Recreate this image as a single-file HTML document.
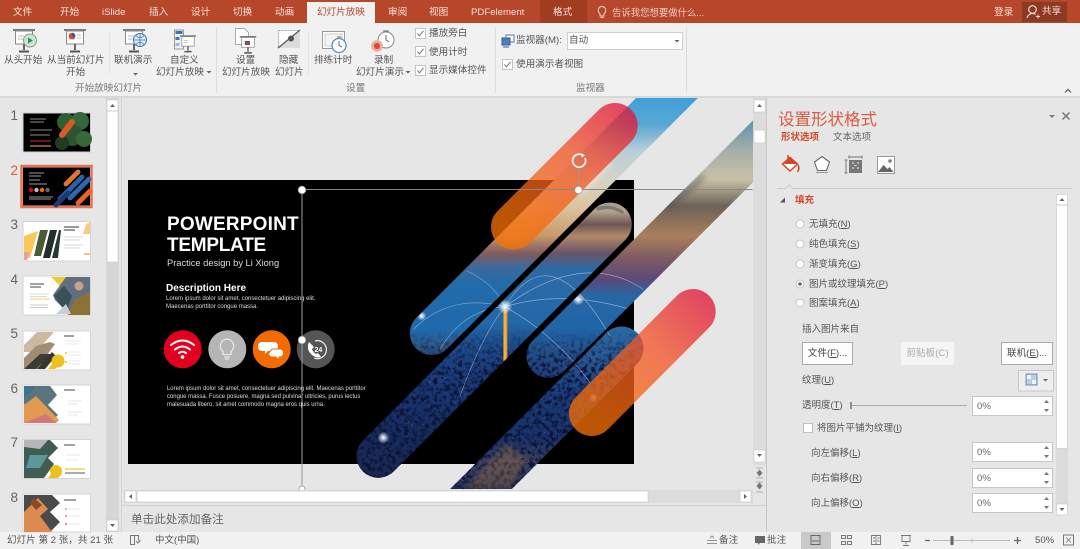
<!DOCTYPE html>
<html lang="zh"><head><meta charset="utf-8"><title>PowerPoint</title>
<style>
html,body{margin:0;padding:0;width:1080px;height:549px;overflow:hidden;background:#e6e6e6}
body{font-family:"Liberation Sans","Noto Sans CJK SC",sans-serif;font-size:9.6px;color:#555;position:relative;filter:blur(.25px)}
.t{position:absolute;white-space:nowrap;line-height:12px;height:12px;margin-top:1px}
.b{position:absolute}
svg{position:absolute;left:0;top:0}
.w{color:#f6e3dc}
u{text-decoration:underline}
.s{color:#fff}
.n{font-size:13.5px;margin-top:0;left:10.5px;color:#666}
.inp{position:absolute;background:#fff;border:1px solid #c6c6c6;box-sizing:border-box;left:972px;width:81px;height:20px;padding-left:4px;line-height:19px;color:#666}
.btn{position:absolute;background:#fdfdfd;border:1px solid #ababab;box-sizing:border-box;text-align:center;height:23px;line-height:22px;color:#444}
</style></head><body>

<!-- panel backgrounds -->
<div class="b" style="left:0;top:0;width:1080px;height:23px;background:#b7472a"></div>
<div class="b" style="left:307px;top:2px;width:68px;height:21px;background:#f1f1f1"></div>
<div class="b" style="left:540px;top:0;width:47px;height:23px;background:#a13c21"></div>
<div class="b" style="left:1022px;top:2px;width:45px;height:20px;background:#8e3a22"></div>
<div class="b" style="left:0;top:23px;width:1080px;height:73px;background:#f1f1f1"></div>
<div class="b" style="left:0;top:96px;width:1080px;height:2px;background:#d8d8d8"></div>
<div class="b" style="left:0;top:532px;width:1080px;height:17px;background:#f1f1f1"></div>
<div class="b" style="left:801px;top:532px;width:30px;height:17px;background:#c9c9c9"></div>
<div class="b" style="left:121px;top:98px;width:1px;height:434px;background:#d4d4d4"></div>
<div class="b" style="left:766px;top:98px;width:1px;height:434px;background:#c8c8c8"></div>
<div class="b" style="left:122px;top:505px;width:644px;height:1px;background:#cfcfcf"></div>
<!-- ribbon separators -->
<div class="b" style="left:216px;top:27px;width:1px;height:66px;background:#dcdcdc"></div>
<div class="b" style="left:495px;top:27px;width:1px;height:66px;background:#dcdcdc"></div>
<div class="b" style="left:686px;top:27px;width:1px;height:66px;background:#dcdcdc"></div>
<div class="b" style="left:109px;top:32px;width:1px;height:42px;background:#e4e4e4"></div>
<div class="b" style="left:308px;top:32px;width:1px;height:42px;background:#e4e4e4"></div>

<!-- tabs -->
<span class="t w" style="left:13px;top:6px">文件</span>
<span class="t w" style="left:60px;top:6px">开始</span>
<span class="t w" style="left:102px;top:6px">iSlide</span>
<span class="t w" style="left:149px;top:6px">插入</span>
<span class="t w" style="left:191px;top:6px">设计</span>
<span class="t w" style="left:233px;top:6px">切换</span>
<span class="t w" style="left:275px;top:6px">动画</span>
<span class="t" style="left:317px;top:6px;color:#b7472a">幻灯片放映</span>
<span class="t w" style="left:388px;top:6px">审阅</span>
<span class="t w" style="left:429px;top:6px">视图</span>
<span class="t w" style="left:471px;top:6px">PDFelement</span>
<span class="t w" style="left:553px;top:6px">格式</span>
<span class="t w" style="left:612px;top:5.5px;opacity:.85;font-size:9.4px">告诉我您想要做什么...</span>
<span class="t w" style="left:994px;top:6px">登录</span>
<span class="t w" style="left:1042px;top:5px">共享</span>

<!-- ribbon labels -->
<span class="t" style="left:4px;top:54px">从头开始</span>
<span class="t" style="left:47px;top:54px">从当前幻灯片</span>
<span class="t" style="left:66px;top:66px">开始</span>
<span class="t" style="left:114px;top:54px">联机演示</span>
<span class="t" style="left:170px;top:54px">自定义</span>
<span class="t" style="left:156px;top:66px">幻灯片放映</span>
<span class="t" style="left:236px;top:54px">设置</span>
<span class="t" style="left:222px;top:66px">幻灯片放映</span>
<span class="t" style="left:279px;top:54px">隐藏</span>
<span class="t" style="left:275px;top:66px">幻灯片</span>
<span class="t" style="left:314px;top:54px">排练计时</span>
<span class="t" style="left:374px;top:54px">录制</span>
<span class="t" style="left:356px;top:66px">幻灯片演示</span>
<span class="t" style="left:429px;top:27px">播放旁白</span>
<span class="t" style="left:429px;top:45.500px">使用计时</span>
<span class="t" style="left:429px;top:64px">显示媒体控件</span>
<span class="t" style="left:516px;top:34px">监视器(M):</span>
<div class="b" style="left:567px;top:32px;width:116px;height:18px;background:#fff;border:1px solid #d0d0d0;box-sizing:border-box"></div>
<span class="t" style="left:569px;top:34px">自动</span>
<span class="t" style="left:516px;top:58px">使用演示者视图</span>
<span class="t" style="left:75px;top:82px;color:#777">开始放映幻灯片</span>
<span class="t" style="left:346px;top:82px;color:#777">设置</span>
<span class="t" style="left:576px;top:82px;color:#777">监视器</span>

<!-- slide base -->
<div class="b" style="left:128px;top:180px;width:506px;height:284px;background:#000"></div>
<span class="t s" style="left:167px;top:214px;font-size:19px;font-weight:bold;line-height:20px;height:20px;letter-spacing:.2px;margin-top:1px">POWERPOINT</span>
<span class="t s" style="left:167px;top:235px;font-size:19px;font-weight:bold;line-height:20px;height:20px;letter-spacing:-.25px;margin-top:1px">TEMPLATE</span>
<span class="t" style="left:167px;top:257px;font-size:9.3px;color:#ddd;margin-top:0">Practice design by Li Xiong</span>
<span class="t s" style="left:166px;top:281px;font-size:10px;font-weight:bold;margin-top:1.5px">Description Here</span>
<span class="t" style="left:166px;top:292px;font-size:6px;color:#ddd;margin-top:.5px">Lorem ipsum dolor sit amet, consectetuer adipiscing elit.</span>
<span class="t" style="left:166px;top:300px;font-size:6px;color:#ddd;margin-top:.5px">Maecenas porttitor congue massa.</span>
<span class="t" style="left:167px;top:382px;font-size:5.95px;color:#ddd;margin-top:.5px">Lorem ipsum dolor sit amet, consectetuer adipiscing elit. Maecenas porttitor</span>
<span class="t" style="left:167px;top:390px;font-size:5.95px;color:#ddd;margin-top:.5px">congue massa. Fusce posuere, magna sed pulvinar ultricies, purus lectus</span>
<span class="t" style="left:167px;top:398px;font-size:5.95px;color:#ddd;margin-top:.5px">malesuada libero, sit amet commodo magna eros quis urna.</span>

<!-- artwork & chrome graphics -->
<svg width="1080" height="549" viewBox="0 0 1080 549">
<defs>
<linearGradient id="ga" gradientUnits="userSpaceOnUse" x1="0" y1="0" x2="0" y2="790">
<stop offset="0" stop-color="#3d9fd8"/><stop offset=".11" stop-color="#5aa8d4"/><stop offset=".21" stop-color="#b9cfd8"/><stop offset=".32" stop-color="#d6d3c5"/><stop offset=".42" stop-color="#dcc4a0"/><stop offset=".53" stop-color="#c79a6b"/><stop offset=".6" stop-color="#7d5a5f"/><stop offset=".65" stop-color="#3e6a9c"/><stop offset=".71" stop-color="#236ba9"/><stop offset=".89" stop-color="#1f69ad"/><stop offset=".94" stop-color="#2d5a8c"/><stop offset="1" stop-color="#25406e"/></linearGradient>
<linearGradient id="gb" gradientUnits="userSpaceOnUse" x1="0" y1="320" x2="0" y2="1140">
<stop offset="0" stop-color="#9c9a92"/><stop offset=".03" stop-color="#b5a58e"/><stop offset=".08" stop-color="#6e5555"/><stop offset=".122" stop-color="#b08a66"/><stop offset=".183" stop-color="#6a5568"/><stop offset=".244" stop-color="#2c6aa6"/><stop offset=".44" stop-color="#2368a8"/><stop offset=".51" stop-color="#1e4f8e"/><stop offset=".585" stop-color="#1b3f80"/><stop offset=".83" stop-color="#152c60"/><stop offset="1" stop-color="#1a2850"/></linearGradient>
<linearGradient id="gc" gradientUnits="userSpaceOnUse" x1="0" y1="75" x2="0" y2="850">
<stop offset="0" stop-color="#5f93ab"/><stop offset=".12" stop-color="#a8b0a8"/><stop offset=".226" stop-color="#c9c0a8"/><stop offset=".329" stop-color="#6d6258"/><stop offset=".445" stop-color="#a97f5d"/><stop offset=".535" stop-color="#7d5963"/><stop offset=".613" stop-color="#5a4a78"/><stop offset=".677" stop-color="#2866a5"/><stop offset=".806" stop-color="#1f65a8"/><stop offset=".91" stop-color="#234c86"/><stop offset="1" stop-color="#1d3c78"/></linearGradient>
<linearGradient id="gd" gradientUnits="userSpaceOnUse" x1="0" y1="690" x2="0" y2="1190">
<stop offset="0" stop-color="#2a6aa5"/><stop offset=".18" stop-color="#2a5a95"/><stop offset=".42" stop-color="#1a3a78"/><stop offset=".68" stop-color="#1b3268"/><stop offset=".82" stop-color="#3a3f60"/><stop offset="1" stop-color="#1c2c55"/></linearGradient>
<linearGradient id="o1" gradientUnits="userSpaceOnUse" x1="490" y1="395" x2="860" y2="50">
<stop offset="0" stop-color="#f87006"/><stop offset=".55" stop-color="#f25428"/><stop offset="1" stop-color="#df1038"/></linearGradient>
<linearGradient id="o2" gradientUnits="userSpaceOnUse" x1="725" y1="950" x2="1095" y2="610">
<stop offset="0" stop-color="#f87006"/><stop offset=".55" stop-color="#f25428"/><stop offset="1" stop-color="#df1038"/></linearGradient>
<mask id="mk" maskUnits="userSpaceOnUse" x="0" y="0" width="1300" height="1300">
<g stroke="#fff" stroke-width="131" stroke-linecap="round" fill="none">
<path d="M245 712L1000-43"/><path d="M85 1080L780 385"/><path d="M595 780L1300 75"/><path d="M815 757L300 1272"/></g></mask>
<clipPath id="cv"><rect x="122" y="98" width="631" height="391"/></clipPath>
<filter id="cityn" x="0" y="0" width="1" height="1" color-interpolation-filters="sRGB"><feTurbulence type="fractalNoise" baseFrequency=".22" numOctaves="2" seed="7"/><feColorMatrix type="matrix" values="0 0 0 0 .95  0 0 0 0 .58  0 0 0 0 .26  4 5 0 0 -6.1"/></filter>
<filter id="cityb" x="0" y="0" width="1" height="1" color-interpolation-filters="sRGB"><feTurbulence type="fractalNoise" baseFrequency=".08" numOctaves="3" seed="3"/><feColorMatrix type="matrix" values="0 0 0 0 .04  0 0 0 0 .08  0 0 0 0 .22  0 3 3 0 -2.8"/></filter>
<filter id="soft" x="-.2" y="-.2" width="1.4" height="1.4"><feGaussianBlur stdDeviation="9"/></filter>
<radialGradient id="glow"><stop offset="0" stop-color="#fff"/><stop offset=".35" stop-color="#fff" stop-opacity=".7"/><stop offset="1" stop-color="#fff" stop-opacity="0"/></radialGradient>
<linearGradient id="cityfade" gradientUnits="userSpaceOnUse" x1="0" y1="700" x2="0" y2="820"><stop offset="0" stop-color="#fff" stop-opacity="0"/><stop offset="1" stop-color="#fff"/></linearGradient>
<mask id="cf" maskUnits="userSpaceOnUse" x="0" y="0" width="1300" height="1300"><rect width="1300" height="1300" fill="url(#cityfade)"/></mask>
<symbol id="proj" viewBox="0 0 22 24" overflow="visible"><rect x="0" y="0" width="22" height="2" fill="#7a7a7a"/><rect x="2.5" y="2" width="17" height="13" fill="#fff" stroke="#8a8a8a"/><path d="M11 15v6" stroke="#666" stroke-width="2"/><path d="M6 22.5h10" stroke="#555" stroke-width="2"/><path d="M5 7h6M5 10h6" stroke="#bbb"/></symbol>
<symbol id="cb" viewBox="0 0 11 11"><rect x=".5" y=".5" width="10" height="10" fill="#fff" stroke="#c4c4c4"/><path d="M2.5 5.5l2 2.3 4-5" fill="none" stroke="#777" stroke-width="1"/></symbol>
</defs>

<!-- main art in zoom coordinates -->
<g clip-path="url(#cv)"><g transform="translate(350 96) scale(.33333)">
<g fill="none" stroke-width="131" stroke-linecap="round">
<path stroke="url(#ga)" d="M245 712L1000-43"/>
<path stroke="url(#gb)" d="M85 1080L780 385"/>
<path stroke="url(#gc)" d="M595 780L1300 75"/>
<path stroke="url(#gd)" d="M815 757L300 1272"/>
</g>
<g mask="url(#mk)">
<g mask="url(#cf)"><rect x="0" y="700" width="1000" height="500" filter="url(#cityb)"/><rect x="0" y="700" width="1000" height="500" filter="url(#cityn)"/></g>
<path d="M340 1180L470 1040 530 1090 480 1180Z" fill="#c98a3e" opacity=".28" filter="url(#soft)"/>
<path d="M460 640h12v155h-12z" fill="#e69a2a"/>
<path d="M465 640v150" stroke="#f8c860" stroke-width="3"/>
<path d="M1060 240Q1000 300 950 330" stroke="#39404a" stroke-width="16" fill="none" opacity=".45" filter="url(#soft)"/>
<path d="M780 195Q720 250 690 290" stroke="#f6f1e8" stroke-width="26" fill="none" opacity=".5" filter="url(#soft)"/>
<path d="M740 340Q780 325 820 350" stroke="#4a4a4a" stroke-width="10" fill="none" opacity=".45"/>
<g fill="none" stroke="#fff" stroke-width="2" opacity=".45">
<path d="M190 700Q300 590 465 632"/><path d="M465 632Q600 410 780 720"/><path d="M465 632Q700 460 880 580"/>
<path d="M330 900Q400 710 465 632"/><path d="M270 760Q340 640 465 632"/><path d="M350 525Q430 560 465 632"/>
<path d="M465 632Q640 580 840 640"/><path d="M465 632Q620 720 720 860"/></g>
<circle cx="465" cy="632" r="22" fill="url(#glow)"/><circle cx="685" cy="610" r="18" fill="url(#glow)"/><circle cx="215" cy="660" r="14" fill="url(#glow)"/><circle cx="100" cy="1025" r="18" fill="url(#glow)"/><circle cx="730" cy="905" r="14" fill="url(#glow)" opacity=".7"/>
</g>
<g fill="none" stroke-width="136" stroke-linecap="round" opacity=".76">
<path stroke="url(#o1)" d="M491 393L795 89"/>
<path stroke="url(#o2)" d="M725 952L1029 647"/>
</g>
</g></g>

<!-- slide circles -->
<circle cx="182.7" cy="349.3" r="19" fill="#e2001f"/><circle cx="227.3" cy="349.3" r="19" fill="#b5b5b5"/><circle cx="271.7" cy="349.3" r="19" fill="#f26b00"/><circle cx="315.7" cy="349.3" r="19" fill="#555"/>
<g fill="none" stroke="#fff" stroke-width="2" stroke-linecap="round"><path d="M171 345q11.500-9 23 0"/><path d="M175 349.500q7.500-6 15 0"/><path d="M179 353q3.500-2.500 7 0"/></g><circle cx="182.500" cy="357" r="1.800" fill="#fff"/>
<path d="M227 339a7 7 0 0 0-4 12.500v3h8v-3a7 7 0 0 0-4-12.500zM224 357h6M225 359h4" fill="none" stroke="#e8e8e8" stroke-width="1.300"/>
<path d="M262 342h12a4 4 0 0 1 4 4v1a4 4 0 0 1-4 4h-6l-3 3v-3h-3a4 4 0 0 1-4-4v-1a4 4 0 0 1 4-4z" fill="#fff"/><path d="M272 349h8a3.500 3.500 0 0 1 3.500 3.500v1a3.500 3.500 0 0 1-3.500 3.500h-1v3l-3-3h-4a3.500 3.500 0 0 1-3.500-3.500z" fill="#fff" stroke="#f26b00"/>
<path d="M315 341a9 9 0 1 1-1 17" fill="none" stroke="#eee" stroke-width="1.200"/><path d="M309 342q-3 7 2 12t10 3l-3-4-2 1q-3-2-4-5l2-2z" fill="#fff"/>
<text x="314.500" y="352" font-size="7" font-weight="bold" fill="#fff" font-family="Liberation Sans,sans-serif">24</text>

<!-- selection -->
<g stroke="#888" fill="none"><path d="M302 189.500H752.500"/><path d="M302 190V489" stroke="#9a9a9a"/><path d="M578.500 168V188" stroke="#999"/></g>
<g fill="#fff" stroke="#999" stroke-width=".8"><circle cx="302" cy="190" r="3.800"/><circle cx="578.500" cy="190" r="3.800"/><circle cx="302" cy="340" r="3.800"/><circle cx="302" cy="489" r="3"/></g>
<path d="M585 158a6.500 6.500 0 1 1-2-2.500" fill="none" stroke="#f2f2f2" stroke-width="1.800"/><path d="M581 153l4 2.500-3.500 2z" fill="#f2f2f2"/>

<!-- left scrollbar -->
<rect x="106" y="98" width="13" height="434" fill="#d6d6d6"/><rect x="107" y="100" width="11" height="162" fill="#fff" stroke="#c6c6c6" stroke-width=".6"/><path d="M107 111h11" stroke="#ccc"/><rect x="107" y="520" width="11" height="11" fill="#fff" stroke="#c6c6c6" stroke-width=".6"/>
<path d="M110 107l2.500-3 2.500 3zM110 524l2.500 3 2.500-3z" fill="#666"/>

<!-- canvas scrollbars -->
<rect x="753" y="98" width="13" height="367" fill="#dcdcdc"/><rect x="754" y="100" width="11" height="12" fill="#fff" stroke="#c6c6c6" stroke-width=".6"/><rect x="754" y="130" width="11" height="13" fill="#fff" stroke="#c6c6c6" stroke-width=".6"/><rect x="754" y="450" width="11" height="12" fill="#fff" stroke="#c6c6c6" stroke-width=".6"/>
<path d="M757 107l2.500-3 2.500 3zM757 454l2.500 3 2.500-3z" fill="#666"/>
<path d="M756 468h7M756 478h7M757 473l2.500-3 2.500 3zM757 473l2.500 3 2.500-3z" fill="#777" stroke="#777" stroke-width=".6"/><path d="M756 492h7M756 482h7M757 486l2.500 3 2.500-3zM757 486l2.500-3 2.500 3z" fill="#777" stroke="#777" stroke-width=".6"/>
<rect x="124" y="490" width="629" height="13" fill="#dcdcdc"/><rect x="125" y="491" width="11" height="11" fill="#fff" stroke="#c6c6c6" stroke-width=".6"/><rect x="137" y="491" width="511" height="11" fill="#fff" stroke="#c6c6c6" stroke-width=".6"/><rect x="740" y="491" width="11" height="11" fill="#fff" stroke="#c6c6c6" stroke-width=".6"/>
<path d="M132 494l-3 2.500 3 2.500zM744 494l3 2.500-3 2.500z" fill="#666"/>

<!-- thumbnails -->
<g style="filter:blur(.35px)">
<rect x="23" y="113" width="67.500" height="39" fill="#000" stroke="#cfcfcf"/>
<circle cx="66" cy="122" r="9" fill="#2f5f34"/><circle cx="80" cy="121" r="9" fill="#33683a"/><circle cx="72" cy="135" r="11" fill="#2b5530"/><circle cx="84" cy="139" r="8" fill="#36683a"/><circle cx="62" cy="143" r="7" fill="#1e3c22"/>
<path d="M62 135L72 122" stroke="#d85a26" stroke-width="6" stroke-linecap="round"/>
<path d="M30 119h16M30 122h14M30 130h22M30 135h20" stroke="#bbb" stroke-width=".8"/><path d="M30 141h21" stroke="#b02030" stroke-width="1.300"/><path d="M30 146h21" stroke="#d88a20" stroke-width="1.300"/>

<rect x="21.500" y="166" width="70" height="41" fill="none" stroke="#e9704f" stroke-width="2.500"/>
<rect x="23" y="167.500" width="67" height="38" fill="#000"/>
<g stroke-linecap="round" stroke-width="4.800" fill="none"><path d="M60 199L82 177" stroke="#2563ad"/><path d="M70 198L89 179" stroke="#2a68b0"/><path d="M56 205L68 193" stroke="#1c3a70"/><path d="M66 184L78 172" stroke="#e8742a"/><path d="M78 203L90 191" stroke="#e8642a"/></g>
<path d="M29 173h15M29 176h12M29 180h11M29 184h18M29 197h24M29 199h22" stroke="#ccc" stroke-width=".8"/>
<circle cx="31" cy="190" r="2.200" fill="#e2001f"/><circle cx="36.500" cy="190" r="2.200" fill="#bbb"/><circle cx="42" cy="190" r="2.200" fill="#f26b00"/><circle cx="47.500" cy="190" r="2.200" fill="#666"/>

<rect x="23" y="221.500" width="67.500" height="39.500" fill="#fff" stroke="#d4d4d4"/>
<path d="M24 236L38 231 30 258H24Z" fill="#f8c858"/><path d="M24 252L30 252 27 260H24Z" fill="#e8a0a0"/>
<path d="M34 256L40 230H48L41 256Z" fill="#4c5a38"/><path d="M43 258L50 230H57L50 258Z" fill="#232f2c"/><path d="M52 258L59 230H61L58 258Z" fill="#28392f"/>
<path d="M64 227h15M64 230h11" stroke="#333" stroke-width="1"/><path d="M64 237h19M64 240h16M64 245h19M64 248h16" stroke="#ccc" stroke-width=".8"/><path d="M86 224L90 222V234H83Z" fill="#f6cc80"/><path d="M84 254h6" stroke="#f0a030" stroke-width="1.300"/>

<rect x="23" y="276" width="67.500" height="39" fill="#fff" stroke="#d4d4d4"/>
<path d="M51 277H74L64 290Z" fill="#ecca3a"/><path d="M66 277H90V315H70L55 300 53 295Z" fill="#5f6e80"/><path d="M54 296L64 286 72 296 66 312Z" fill="#38505c"/><path d="M74 300L90 292V315H68Z" fill="#8c7236"/><circle cx="79" cy="286" r="4.500" fill="#c9a18a"/><path d="M56 314L66 304 71 314Z" fill="#c8ced4"/>
<path d="M30 284h14M30 287h11" stroke="#444" stroke-width="1"/><path d="M30 294h19M30 296.500h17" stroke="#ccc" stroke-width=".8"/><path d="M30 299h20" stroke="#ecd060" stroke-width="1.100"/><path d="M30 305h18M30 307.500h18" stroke="#bbb" stroke-width=".8"/>

<rect x="23" y="331" width="67.500" height="39" fill="#fff" stroke="#d4d4d4"/>
<path d="M24 345L37 332H54L36 352 24 352Z" fill="#cdb8a2"/><path d="M24 358L36 346 50 342 55 344 37 369H24Z" fill="#a08d75"/><path d="M24 369L40 354 52 354 36 369Z" fill="#3d3c33"/><path d="M37 369L52 352 56 356 45 369Z" fill="#38362c"/>
<circle cx="58" cy="361" r="6.500" fill="#ecc01e"/><path d="M48 369L57 358 62 362 55 369Z" fill="#ecc01e"/>
<path d="M64 336h10" stroke="#444" stroke-width="1"/><path d="M65 341h16M65 344h13M68 352h12M68 355h13M68 361h12M68 364h12" stroke="#e2e2e2" stroke-width=".8"/><circle cx="66" cy="353" r="1" fill="#eec030"/><circle cx="66" cy="362" r="1" fill="#eec030"/>

<rect x="23" y="385" width="67.500" height="39" fill="#fff" stroke="#d4d4d4"/>
<path d="M24 386H50L57 395 48 405 58 415 50 423 24 404Z" fill="#5a7480"/><path d="M24 386H36L24 398Z" fill="#3a7290"/><path d="M24 405L36 396 59 420 56 423H24Z" fill="#e09a52"/><path d="M24 423H56L46 414Z" fill="#d4757a"/>
<path d="M64 390h11" stroke="#444" stroke-width="1"/><path d="M68 401h14M68 404h10M68 412h14M68 415h10" stroke="#ddd" stroke-width=".8"/>

<rect x="23" y="439.500" width="67.500" height="39" fill="#fff" stroke="#d4d4d4"/>
<path d="M24 440H50L58 448 48 458 54 464 44 478H24Z" fill="#3f5c55"/><path d="M24 440H48L40 449 24 447Z" fill="#b6b6ba"/><path d="M30 455L48 455 40 468H26Z" fill="#5f9698"/>
<path d="M48 478L56 467 62 474 58 478Z" fill="#ecc01e"/><circle cx="56" cy="471" r="6" fill="#ecc01e"/>
<path d="M64 445h11" stroke="#444" stroke-width="1"/><path d="M66 455h14M66 460h12" stroke="#e2e2e2" stroke-width=".8"/><path d="M65 469h20" stroke="#ecc840" stroke-width="1.300"/><path d="M65 473h20" stroke="#555" stroke-width="1"/>

<rect x="23" y="494" width="67.500" height="38" fill="#fff" stroke="#d4d4d4"/>
<path d="M24 495H52L60 503 50 512 60 522 50 532H24Z" fill="#4b4a48"/><path d="M24 512L38 498 48 509 40 516 52 532H24Z" fill="#dd8a50"/><path d="M34 498L42 505 36 510 30 503Z" fill="#8a4a2a"/>
<path d="M64 500h12" stroke="#444" stroke-width="1"/><path d="M68 509h12M68 516h12M68 524h12" stroke="#e2e2e2" stroke-width=".8"/><circle cx="66" cy="509" r="1" fill="#e8a060"/><circle cx="66" cy="516" r="1" fill="#d88"/><circle cx="66" cy="524" r="1" fill="#c66"/>
</g>

<!-- ribbon icons -->
<use href="#proj" x="13" y="29" width="22" height="24"/><circle cx="30" cy="40.500" r="6.500" fill="#cfe3d5" stroke="#7aa58a"/><path d="M28 37.500l5 3-5 3z" fill="#2f8f58"/>
<use href="#proj" x="64" y="29" width="22" height="24"/><circle cx="72" cy="36" r="3.300" fill="#d84a38"/><path d="M72 36V32.700a3.300 3.300 0 0 1 3 4.800z" fill="#2f5a94"/><path d="M77 35h4M77 38h4" stroke="#bbb"/>
<use href="#proj" x="123" y="29" width="22" height="24"/><circle cx="140" cy="40" r="6.500" fill="#dfeaf6" stroke="#3d78b8"/><path d="M133.500 40h13M140 33.500v13M136 35.500q4 4.500 8 0M136 44.500q4-4.500 8 0" fill="none" stroke="#3d78b8" stroke-width=".8"/>
<rect x="174.500" y="30" width="9" height="19" fill="#f1f1f1" stroke="#999"/><rect x="175.500" y="31" width="7" height="3" fill="#3d78b8"/><rect x="175.500" y="37" width="4" height="3" fill="#3d78b8"/><rect x="175.500" y="43" width="4" height="3" fill="#9fb8d4"/>
<use href="#proj" x="180" y="35" width="16" height="18"/>
<path d="M235.500 28.500h9l4 4v12h-13z" fill="#fff" stroke="#aaa"/><use href="#proj" x="238" y="36" width="20" height="18"/><rect x="245" y="41" width="5" height="4" fill="#555"/><path d="M245 43h5" stroke="#d84a38"/>
<rect x="278.500" y="30.500" width="21" height="17" fill="#fff" stroke="#aaa" stroke-dasharray="2 1"/><path d="M278 48L300 30V48Z" fill="#dcdcdc"/><path d="M278 48L300 30" stroke="#555" stroke-width="1.200"/><circle cx="291" cy="38.500" r="3" fill="#555"/>
<rect x="322.500" y="31.500" width="22" height="17" fill="#fff" stroke="#999"/><rect x="325" y="34" width="17" height="12" fill="#f4f4f4" stroke="#ccc"/><circle cx="339" cy="45.500" r="7" fill="#fff" stroke="#5d8cbc" stroke-width="1.300"/><path d="M339 41v4.500l3 1.500" fill="none" stroke="#666"/><path d="M337 37h4" stroke="#666"/>
<circle cx="386" cy="40" r="8" fill="#fff" stroke="#888"/><path d="M386 35v5l3 2" fill="none" stroke="#666"/><path d="M383 31h6" stroke="#666"/><circle cx="377" cy="46" r="5.500" fill="#e9a79c" stroke="#e4c0b8"/><circle cx="377" cy="46" r="3" fill="#e5472e"/>
<path d="M133 73h5l-2.500 2.500zM206.500 71h5l-2.500 2.500zM405.500 71h5l-2.500 2.500zM674.500 40h5l-2.500 2.500z" fill="#666"/>
<use href="#cb" x="415" y="28" width="11" height="11"/><use href="#cb" x="415" y="46" width="11" height="11"/><use href="#cb" x="415" y="65" width="11" height="11"/><use href="#cb" x="502" y="59" width="11" height="11"/>
<rect x="506" y="35" width="8" height="7" fill="#f4f4f4" stroke="#5a7fa8"/><rect x="502" y="38" width="8" height="7" fill="#4a7fb8" stroke="#35608e"/><path d="M503 47h6" stroke="#35608e"/>
<path d="M1065 92.500l3-3 3 3" fill="none" stroke="#666" stroke-width="1.300"/>

<!-- title-bar icons -->
<path d="M602 6.500a3.800 3.800 0 0 0-2 7v2.500h4v-2.500a3.800 3.800 0 0 0-2-7zM600.500 17.500h3" fill="none" stroke="#f6e3dc" stroke-width=".9"/>
<circle cx="1032.500" cy="9.500" r="3.800" fill="none" stroke="#f6e3dc" stroke-width="1.100"/><path d="M1027 18q1-4 5.500-4.500 2 0 3 1" fill="none" stroke="#f6e3dc" stroke-width="1.100"/><path d="M1036 16.500h4M1038 14.500v4" stroke="#f6e3dc"/>

<!-- task pane -->
<path d="M1049 115h6l-3 3z" fill="#777"/><path d="M1062.500 112.500l7 7M1069.500 112.500l-7 7" stroke="#777" stroke-width="1.500"/>
<path d="M777 188.500H786l3.500-3.500 3.500 3.500H1072" fill="none" stroke="#c9c9c9"/>
<path d="M790 157.500l7.500 6.500-7.500 7-7.500-7z" fill="#fff" stroke="#d24726" stroke-width="1.500"/><path d="M784 164h13l-7-7z" fill="#d24726"/><path d="M788 155v5" stroke="#d24726" stroke-width="1.500"/><path d="M798 165q2 3-.5 7" fill="none" stroke="#d24726" stroke-width="1.500"/>
<path d="M822 156.500l7.500 5.500-3 8.500h-9l-3-8.500z" fill="#fff" stroke="#666" stroke-width="1.100"/><path d="M816 172.500h12" stroke="#999"/>
<rect x="849" y="160" width="13" height="13" fill="#777"/><path d="M846 160v13M844.500 160h3M844.500 173h3M849 157h13M849 155.500v3M862 155.500v3" stroke="#777" fill="none"/><path d="M852 163h2M857 163h2M852 168h2M857 168h2M854.500 165.500h2" stroke="#eee"/>
<rect x="877.500" y="156.500" width="17" height="17" fill="#fff" stroke="#999"/><path d="M878 172l5.500-7 4 4 2-2 4 5z" fill="#666"/><circle cx="890" cy="161" r="1.700" fill="#777"/>
<path d="M785 197.500v5h-5z" fill="#555"/>
<g fill="#fff" stroke="#c4c4c4"><circle cx="800" cy="224" r="4"/><circle cx="800" cy="244" r="4"/><circle cx="800" cy="264" r="4"/><circle cx="800" cy="284" r="4"/><circle cx="800" cy="303" r="4"/></g><circle cx="800" cy="284" r="1.800" fill="#666"/>
<rect x="1056" y="194" width="12" height="321" fill="#dcdcdc"/><rect x="1056.500" y="194.500" width="11" height="254" fill="#fff" stroke="#c8c8c8" stroke-width=".6"/><path d="M1056 205h12" stroke="#ccc"/><rect x="1056.500" y="504" width="11" height="11" fill="#fff" stroke="#c8c8c8" stroke-width=".6"/>
<path d="M1059.500 201l2.500-3 2.500 3zM1059.500 508l2.500 3 2.500-3z" fill="#666"/>
<rect x="1018.500" y="370.500" width="35" height="20.500" fill="#eee" stroke="#c6c6c6"/><rect x="1026" y="374" width="11" height="11" fill="#b7cde4" stroke="#6a8fb4"/><path d="M1027 375h4v4h-4zM1032 380h4v4h-4z" fill="#f2f2f2"/><path d="M1043 379h5l-2.500 2.500z" fill="#666"/>
<path d="M851 402v7" stroke="#666" stroke-width="1.300"/><path d="M852 405.500H967" stroke="#aaa"/>
<rect x="803.500" y="423.500" width="9" height="9" fill="#fff" stroke="#bdbdbd"/>

<!-- status icons -->
<path d="M130.500 535.500h4v9h-4zM134.500 535.500h4v5" fill="none" stroke="#777"/><path d="M136 541l2 2 2.500-3" fill="none" stroke="#777"/>
<path d="M707 540.500h10M707 543.500h10M710 538l2-2 2 2" fill="none" stroke="#777" stroke-width=".8"/>
<path d="M755 536h10v7h-5l-2 2v-2h-3z" fill="#666"/>
<rect x="811" y="535.500" width="9" height="9" fill="none" stroke="#666"/><path d="M812 541h7" stroke="#666"/>
<path d="M841.500 535.500h4v3h-4zM847.500 535.500h4v3h-4zM841.500 541.500h4v3h-4zM847.500 541.500h4v3h-4z" fill="none" stroke="#777"/>
<path d="M871.500 535.500h9v9h-9zM876 535.500v9M873 538h2M873 541h2M877.500 538h2M877.500 541h2" fill="none" stroke="#777" stroke-width=".9"/>
<path d="M901 535.500h10M902 535.500v6h8v-6M906 541.500v3M903 545.500h6" fill="none" stroke="#777" stroke-width=".9"/>
<path d="M925 540.500h5M1014 540.500h7M1017.500 537v7" stroke="#666" stroke-width="1.300"/><path d="M933 540.500h77" stroke="#bbb"/><rect x="950.500" y="536" width="3" height="9" fill="#666"/><path d="M972 538.500v4" stroke="#bbb"/>
<rect x="1063.500" y="535" width="10" height="10" fill="none" stroke="#777"/><path d="M1066 537.500l5 5M1071 537.500l-5 5" stroke="#777" stroke-width=".8"/>
</svg>

<!-- thumbnail numbers -->
<span class="t n" style="top:110px">1</span>
<span class="t n" style="top:165px;color:#d9573a">2</span>
<span class="t n" style="top:219px">3</span>
<span class="t n" style="top:274px">4</span>
<span class="t n" style="top:328px">5</span>
<span class="t n" style="top:383px">6</span>
<span class="t n" style="top:437px">7</span>
<span class="t n" style="top:492px">8</span>

<!-- notes -->
<span class="t" style="left:131px;top:513px;font-size:11.6px;color:#666">单击此处添加备注</span>

<!-- pane text -->
<span class="t" style="left:778px;top:109px;font-size:16.5px;line-height:20px;height:20px;color:#d85b44">设置形状格式</span>
<span class="t" style="left:781px;top:131px;color:#d24726;font-weight:bold;font-size:9.5px">形状选项</span>
<span class="t" style="left:833px;top:131px;color:#666;font-size:9.5px">文本选项</span>
<span class="t" style="left:795px;top:193.500px;color:#d24726;font-weight:bold;font-size:9.5px">填充</span>
<span class="t" style="left:809px;top:217.500px;font-size:9.5px">无填充(<u>N</u>)</span>
<span class="t" style="left:809px;top:237.500px;font-size:9.5px">纯色填充(<u>S</u>)</span>
<span class="t" style="left:809px;top:257.500px;font-size:9.5px">渐变填充(<u>G</u>)</span>
<span class="t" style="left:809px;top:277.500px;font-size:9.5px">图片或纹理填充(<u>P</u>)</span>
<span class="t" style="left:809px;top:296.500px;font-size:9.5px">图案填充(<u>A</u>)</span>
<span class="t" style="left:802px;top:322.500px;font-size:9.5px">插入图片来自</span>
<div class="btn" style="left:802px;top:342px;width:51px">文件(<u>F</u>)...</div>
<div class="btn" style="left:901px;top:342px;width:53px;border-color:#f5f5f5;background:#f5f5f5;color:#aaa">剪贴板(C)</div>
<div class="btn" style="left:1001px;top:342px;width:52px">联机(<u>E</u>)...</div>
<span class="t" style="left:802px;top:373.500px;font-size:9.5px">纹理(<u>U</u>)</span>
<span class="t" style="left:802px;top:398.500px;font-size:9.5px">透明度(<u>T</u>)</span>
<div class="inp" style="top:396px">0%</div>
<span class="t" style="left:817px;top:421.500px;font-size:9.5px">将图片平铺为纹理(<u>I</u>)</span>
<span class="t" style="left:811px;top:446.500px;font-size:9.5px">向左偏移(<u>L</u>)</span>
<div class="inp" style="top:442px">0%</div>
<span class="t" style="left:811px;top:471.500px;font-size:9.5px">向右偏移(<u>R</u>)</span>
<div class="inp" style="top:468px">0%</div>
<span class="t" style="left:811px;top:496.500px;font-size:9.5px">向上偏移(<u>O</u>)</span>
<div class="inp" style="top:493px">0%</div>
<svg width="1080" height="549" viewBox="0 0 1080 549" style="pointer-events:none">
<path d="M1044 403l2.500-3 2.500 3zM1044 409l2.500 3 2.500-3zM1044 449l2.500-3 2.500 3zM1044 455l2.500 3 2.500-3zM1044 475l2.500-3 2.500 3zM1044 481l2.500 3 2.500-3zM1044 500l2.500-3 2.500 3zM1044 506l2.500 3 2.500-3z" fill="#777"/>
</svg>

<!-- status bar text -->
<span class="t" style="left:7px;top:533.500px">幻灯片 第 2 张，共 21 张</span>
<span class="t" style="left:155px;top:533.500px;font-size:9.5px">中文(中国)</span>
<span class="t" style="left:719px;top:533.500px">备注</span>
<span class="t" style="left:767px;top:533.500px">批注</span>
<span class="t" style="left:1035px;top:533.500px">50%</span>
</body></html>
